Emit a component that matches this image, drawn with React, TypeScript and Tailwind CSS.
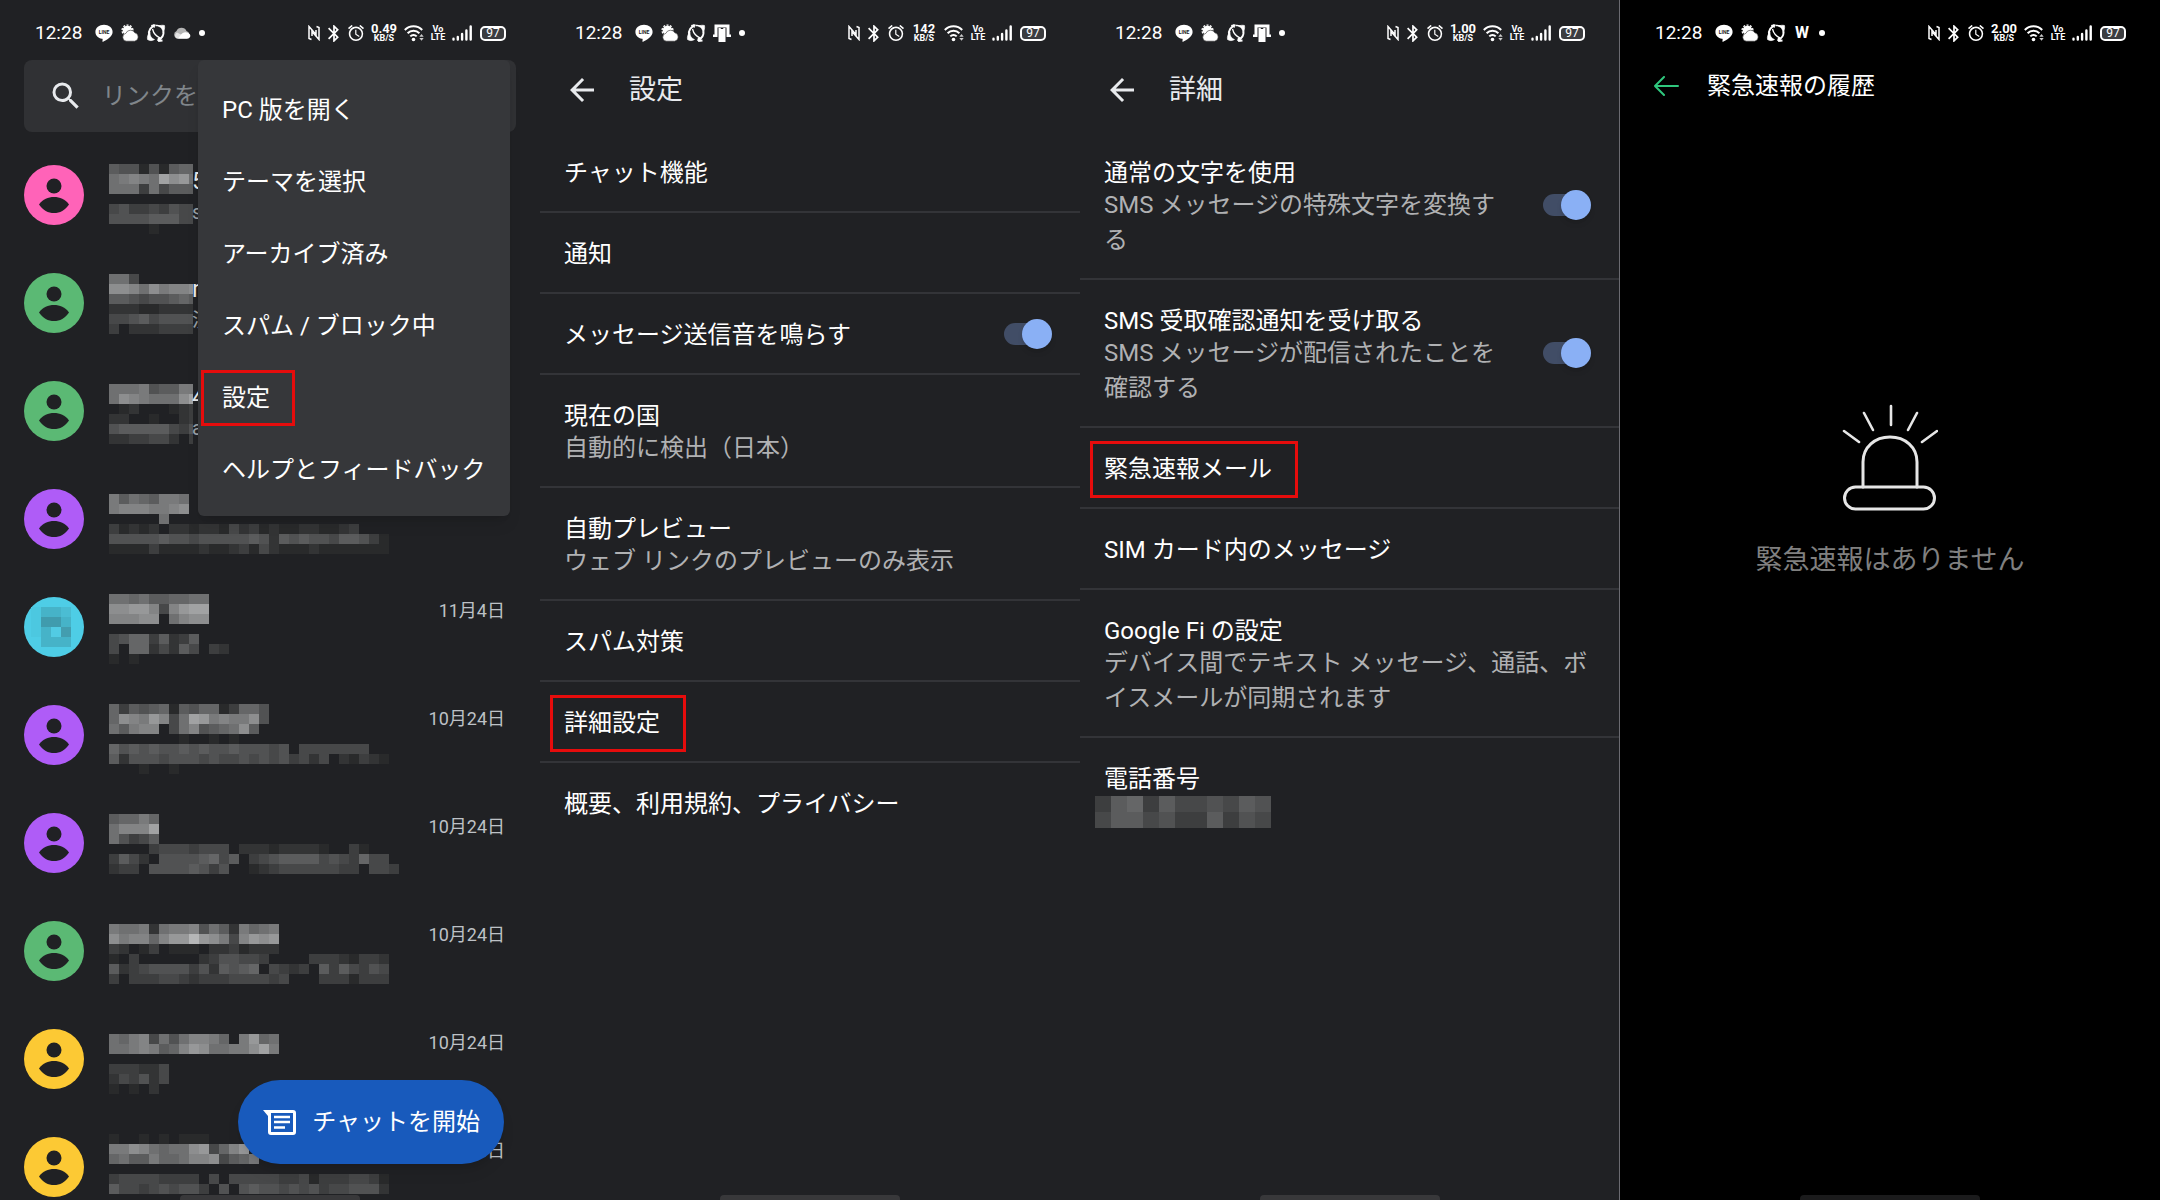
import type { ReactNode } from "react";
import { MdAlarm, MdArrowBack, MdBluetooth, MdSearch } from "react-icons/md";

type Conversation = {
  color: string;
  date?: string;
  top: number;
  cells: string[];
  tail?: string;
  subTail?: string;
  initial?: boolean;
};

type Setting = {
  title: string;
  text?: string;
  toggle?: boolean;
  marked?: boolean;
  hidden?: boolean;
};

// One character per 10px cell, hex brightness, "." is empty.
const conversations: Conversation[] = [
  {
    color: "#ff63b8",
    top: 23,
    tail: "5",
    subTail: "s",
    cells: ["655151677", "89a98dbc8", "888384666", "", "453343544", "555566644", "....1...."],
  },
  {
    color: "#5bb974",
    top: 25,
    tail: "r",
    subTail: "淡",
    cells: ["884......", "bba8b9aab", "665455676", "222112222", "445645555", "3.2223333"],
  },
  {
    color: "#5bb974",
    top: 27,
    tail: "4",
    subTail: "a",
    cells: ["888956699", "8ba9888bd", ".12...123", "22..1..23", "566666435", "2233442.3"],
  },
  {
    color: "#af5cf7",
    top: 29,
    cells: [
      "96876998",
      "9aaa99ab",
      ".....8",
      "31212.2212214231211221123.",
      "5555565545555565265655466531",
      "1111311112112314211121111111",
    ],
  },
  {
    color: "#4ecde6",
    date: "11月4日",
    top: 21,
    initial: true,
    cells: ["8878667788", "bbcca4acdd", "aaabb.8abb", "", "457736236", "4.7724264.32", "1.1"],
  },
  {
    color: "#af5cf7",
    date: "10月24日",
    top: 23,
    cells: [
      "7365671657713775",
      "7ba9ca48dc9a99b5",
      "869aa.48a5678b6",
      ".......1..1.1",
      "756565565655655545.4444444",
      "6255545554544545453424.21321",
      "...1..1",
    ],
  },
  {
    color: "#af5cf7",
    date: "10月24日",
    top: 25,
    cells: [
      "67797",
      "8aaad",
      "85346",
      "....34443444.222122221..31",
      "3642.55556746.34566664543744",
      "233.55556535..12344444433.4432",
    ],
  },
  {
    color: "#5bb974",
    date: "10月24日",
    top: 27,
    cells: [
      "98892899a58629789",
      "b9aa7accfcb94acbc",
      "32.13.111.2231222",
      "1.3......2355443....33321332",
      "623455553526567.4323.6364354",
      "3.3334432333444434...3331333",
    ],
  },
  {
    color: "#fcc934",
    date: "10月24日",
    top: 29,
    cells: ["879a4858aa97.9c78", "889a967acb8899bd9", "", "333224", "243524", "1.1.2"],
  },
  {
    color: "#fcc934",
    date: "10月24日",
    top: 21,
    cells: [
      "1..1.1.111",
      "99ba8788bc47ac",
      "78669778aab4679",
      "",
      "344443333.4.4444433413334431",
      "6443454553.5.565545453445552",
    ],
  },
];

const menuItems = [
  "PC 版を開く",
  "テーマを選択",
  "アーカイブ済み",
  "スパム / ブロック中",
  "設定",
  "ヘルプとフィードバック",
];

const settings: Setting[] = [
  { title: "チャット機能" },
  { title: "通知" },
  { title: "メッセージ送信音を鳴らす", toggle: true },
  { title: "現在の国", text: "自動的に検出（日本）" },
  { title: "自動プレビュー", text: "ウェブ リンクのプレビューのみ表示" },
  { title: "スパム対策" },
  { title: "詳細設定", marked: true },
  { title: "概要、利用規約、プライバシー" },
];

const advanced: Setting[] = [
  { title: "通常の文字を使用", text: "SMS メッセージの特殊文字を変換する", toggle: true },
  {
    title: "SMS 受取確認通知を受け取る",
    text: "SMS メッセージが配信されたことを確認する",
    toggle: true,
  },
  { title: "緊急速報メール", marked: true },
  { title: "SIM カード内のメッセージ" },
  {
    title: "Google Fi の設定",
    text: "デバイス間でテキスト メッセージ、通話、ボイスメールが同期されます",
  },
  { title: "電話番号", hidden: true },
];

const phoneCells = ["36736445465", "46645336354"];

function shade(level: string) {
  const value = 32 + parseInt(level, 16) * 10;
  return `rgb(${value - 1} ${value} ${value + 1})`;
}

function Mosaic({ cells, size = 10, top = 0 }: { cells: string[]; size?: number; top?: number }) {
  return (
    <>
      {cells.map((line, y) =>
        line.split("").map((level, x) =>
          level === "." ? null : (
            <rect
              key={`${x}-${y}`}
              x={x * size}
              y={top + y * size}
              width={size}
              height={size}
              fill={shade(level)}
              shapeRendering="crispEdges"
            />
          ),
        ),
      )}
    </>
  );
}

function LineIcon() {
  return (
    <svg viewBox="0 0 18 18" className="size-[18px]" aria-hidden="true">
      <path
        d="M9 .8C4.200.8.4 3.800.4 7.900c0 3.500 2.800 6.200 6.600 6.800.6.100.7.400.6 1l-.2 1.700c0 .400.300.500.700.300 3.200-1.800 9.500-5 9.500-9.800C17.600 3.800 13.800.8 9 .8z"
        fill="#fff"
      />
      <text x="9" y="10" textAnchor="middle" fontSize="5" fontWeight="700" fill="#222">
        LINE
      </text>
    </svg>
  );
}

function WeatherIcon() {
  return (
    <svg viewBox="0 0 18 18" className="size-[18px]" aria-hidden="true">
      <circle cx="6.500" cy="6.500" r="4.800" fill="#fff" />
      <circle cx="6.500" cy="6.500" r="5.400" fill="none" stroke="#fff" strokeWidth="1.400" strokeDasharray="2 1.400" />
      <path
        d="M5.500 17.200a4 4 0 0 1-.6-7.900 5 5 0 0 1 9-.5 4.300 4.300 0 0 1-.2 8.400z"
        fill="#fff"
        stroke="#333"
        strokeWidth=".6"
      />
    </svg>
  );
}

function OrbitIcon() {
  return (
    <svg viewBox="0 0 20 18" className="-mx-px h-[18px] w-5" fill="none" stroke="#fff" aria-hidden="true">
      <path d="M9.500 1C5 2.500 2 6.500 3.200 11" strokeWidth="1.900" />
      <path d="M5 1.500L8 .5l.5 3z" fill="#fff" strokeWidth=".6" />
      <path d="M1.500 15.500c-.5-3 .5-5.500 2.500-7.500-.3 3.500 1 6 4.500 7.500-2 1.500-5 1.500-7 0z" fill="#fff" strokeWidth=".6" />
      <path d="M10 1.500c4.500-.5 7.500 2 7.800 6" strokeWidth="1.400" />
      <path d="M18.500 1.500c.5 3-.3 5-1.500 7-.3-3-1.500-5-4.500-6.300 2-1 4-1.200 6-.7z" fill="#fff" strokeWidth=".6" />
      <path d="M17.500 7.500c.5 4-2 7-5.500 9M12 17l4.500-.5M12 17l1-3.500" strokeWidth="1.900" />
      <path d="M6.500 5c1 4 3.500 7.500 8 9" strokeWidth="1.300" />
    </svg>
  );
}

function CloudIcon() {
  return (
    <svg viewBox="0 0 18 18" className="size-[18px]" aria-hidden="true">
      <path d="M4 14.500a4 4 0 0 1-.5-7.500A5.500 5.500 0 0 1 13.500 7a4 4 0 0 1 .5 7.500z" fill="#b5b5b5" />
      <path d="M3 14a3.500 3.500 0 0 1 1-5.500L11 12l4 2.500H4z" fill="#e4e4e4" />
      <path d="M7 12c2-4 7-5.500 10-1.500 1 2-.5 4-2.500 4H5z" fill="#fff" />
    </svg>
  );
}

function DeviceIcon() {
  return (
    <svg viewBox="0 0 18 18" className="size-[18px]" fill="#fff" aria-hidden="true">
      <path d="M1.500 0.500h15v10H18V13h-4.500V3.500h-9V13H0v-2.500h1.500z" />
      <path d="M5.500 4h2l.5 1h2l.5-1h2v14h-7z" />
    </svg>
  );
}

function WordIcon() {
  return <span className="w-[18px] text-center text-base font-bold leading-[18px]">W</span>;
}

function NfcIcon() {
  return (
    <svg viewBox="0 0 12 16" className="h-4 w-3" fill="none" stroke="#fff" strokeWidth="1.500" aria-hidden="true">
      <path d="M3.500 14.500L1 13.500V1.500l7 8V5" />
      <path d="M8.500 1.500L11 2.500v12l-7-8V11" />
    </svg>
  );
}

function WifiIcon() {
  return (
    <svg viewBox="0 0 20 18" className="h-[18px] w-5" fill="none" stroke="#fff" strokeWidth="2" aria-hidden="true">
      <path d="M.8 6a12 12 0 0 1 17.400 0M3.600 9.200a8.200 8.200 0 0 1 11.800 0M6.300 12.400a4.600 4.600 0 0 1 6.400 0" />
      <circle cx="9.500" cy="15.500" r="1.800" fill="#fff" stroke="none" />
      <path d="M15.300 12.800l2.200-2.800 2.200 2.800zM15.300 14l2.200 2.800 2.200-2.800z" fill="#ccc" stroke="none" />
    </svg>
  );
}

function SignalIcon() {
  return (
    <svg viewBox="0 0 20 16" className="h-4 w-5" stroke="#fff" strokeWidth="2.400" strokeLinecap="round" aria-hidden="true">
      <path d="M1.500 14.500v-.8M5.800 14.500V12M10.100 14.500V9M14.400 14.500V5.500M18.700 14.500V1.500" />
    </svg>
  );
}

function StatusBar({ speed, icon }: { speed: string; icon: ReactNode }) {
  return (
    <div className="flex h-[66px] shrink-0 items-center justify-between pl-[35px] pr-[34px] text-white">
      <div className="flex items-center gap-2">
        <span className="mr-[5px] w-[47px] text-[19px] leading-6">12:28</span>
        <LineIcon />
        <WeatherIcon />
        <OrbitIcon />
        {icon}
        <span className="size-[6px] rounded-full bg-white" />
      </div>
      <div className="flex items-center gap-2">
        <NfcIcon />
        <MdBluetooth className="h-[19px] w-3" viewBox="5 1 14 22" />
        <MdAlarm className="size-4" viewBox="2 2 20 20" />
        <div className="flex w-6 flex-col items-center font-bold">
          <span className="text-[13px] leading-[10px]">{speed}</span>
          <span className="text-[9px] leading-[9px]">KB/S</span>
        </div>
        <WifiIcon />
        <div className="flex w-3 flex-col items-center text-[9px] font-bold leading-[8px]">
          <span>Vo</span>
          <span>LTE</span>
        </div>
        <SignalIcon />
        <span className="flex h-[15px] w-[26px] items-center justify-center rounded-[5px] border-2 border-white bg-[#3c3d40] text-xs leading-[11px]">
          97
        </span>
      </div>
    </div>
  );
}

function Avatar({ color, initial }: { color: string; initial?: boolean }) {
  return (
    <svg viewBox="0 0 60 60" className="size-[60px] shrink-0" aria-hidden="true">
      <circle cx="30" cy="30" r="30" fill={color} />
      {initial ? (
        <g shapeRendering="crispEdges">
          <path d="M7 10h10v30H7z" fill="#4cc8e0" />
          <path d="M17 10h30v40H17z" fill="#46b3c8" />
          <path d="M37 10h10v10H37z" fill="#4bbdd3" />
          <path d="M17 20h20v10H17z" fill="#409bad" />
          <path d="M27 30h10v10H27z" fill="#52cbe3" />
          <path d="M37 30h10v10H37z" fill="#439daf" />
        </g>
      ) : (
        <g fill="#202124">
          <circle cx="30" cy="21" r="7.500" />
          <path d="M15 39.500C19 34 24 32 30 32s11 2 15 7.500C41 45.500 36 48 30 48s-11-2.500-15-8.500z" />
        </g>
      )}
    </svg>
  );
}

function ConversationRow({ item }: { item: Conversation }) {
  return (
    <li className="flex h-[108px] shrink-0 items-center pl-6 pr-[35px]">
      <Avatar color={item.color} initial={item.initial} />
      <svg viewBox="0 0 290 108" className="ml-[25px] h-[108px] w-[290px] shrink-0">
        <svg width={item.tail ? 84 : 290} height="108">
          <Mosaic cells={item.cells} top={item.top} />
        </svg>
        {item.tail && (
          <text x="83" y="48" fontSize="24" fill="#e8eaed">
            {item.tail}
          </text>
        )}
        {item.subTail && (
          <text x="83" y="78" fontSize="20" fill="#9aa0a6">
            {item.subTail}
          </text>
        )}
      </svg>
      {item.date && (
        <time className="-ml-10 grow self-start whitespace-nowrap pt-[26px] text-right text-lg leading-6 text-[#bdc1c6]">
          {item.date}
        </time>
      )}
    </li>
  );
}

function HomeBar({ dim }: { dim?: boolean }) {
  return (
    <span
      className={`absolute bottom-0 left-1/2 h-[5px] w-[180px] -translate-x-1/2 rounded-t-sm ${dim ? "bg-[#1b1b1c]" : "bg-[#38383a]"}`}
    />
  );
}

function Toggle({ id }: { id: string }) {
  return (
    <span className="relative mr-1 flex h-[30px] w-12 shrink-0 items-center self-center">
      <input
        id={id}
        type="checkbox"
        defaultChecked
        className="h-[22px] w-11 appearance-none rounded-full bg-[#414d66]"
      />
      <span className="pointer-events-none absolute right-0 size-[30px] rounded-full bg-[#8ab0f5] shadow-md" />
    </span>
  );
}

function SettingRow({ item }: { item: Setting }) {
  return (
    <li className="flex min-h-[81px] gap-8 border-b-2 border-[#333438] px-6 last:border-b-0">
      <div className="min-w-0 grow pb-5 pt-[27px]">
        <div className="flex text-2xl leading-[29px] text-white">
          {item.toggle ? (
            <label htmlFor={item.title}>{item.title}</label>
          ) : (
            <button type="button" className="relative text-left">
              {item.title}
              {item.marked && (
                <span className="absolute -inset-y-[14px] -left-[14px] -right-[26px] border-[3px] border-[#e60c0c]" />
              )}
            </button>
          )}
        </div>
        {item.text && <p className="text-2xl leading-[35px] text-[#b0b1b3]">{item.text}</p>}
        {item.hidden && (
          <svg viewBox="0 0 176 32" className="-ml-[9px] mt-[2px] h-8 w-44" aria-hidden="true">
            <Mosaic cells={phoneCells} size={16} />
          </svg>
        )}
      </div>
      {item.toggle && <Toggle id={item.title} />}
    </li>
  );
}

function SettingsScreen({
  title,
  speed,
  items,
  divided,
}: {
  title: string;
  speed: string;
  items: Setting[];
  divided?: boolean;
}) {
  return (
    <section
      className={`relative flex flex-col overflow-hidden bg-[#202124] ${divided ? "border-r border-[#6a6a70]" : ""}`}
    >
      <StatusBar speed={speed} icon={<DeviceIcon />} />
      <header className="flex h-12 items-center gap-[29px] pl-6 text-[#e8eaed]">
        <button type="button" aria-label="戻る">
          <MdArrowBack className="size-9" />
        </button>
        <h1 className="text-[27px] leading-9">{title}</h1>
      </header>
      <ul className="pt-[18px]">
        {items.map((item) => (
          <SettingRow key={item.title} item={item} />
        ))}
      </ul>
      <HomeBar />
    </section>
  );
}

function MessagesScreen() {
  return (
    <section className="relative flex flex-col overflow-hidden bg-[#202124]">
      <StatusBar speed="0.49" icon={<CloudIcon />} />
      <label className="mx-6 -mt-[6px] flex h-[72px] shrink-0 items-center gap-[18px] rounded-lg bg-[#303134] pl-6">
        <MdSearch className="size-9 shrink-0 text-[#e8eaed]" />
        <input
          type="search"
          aria-label="検索"
          placeholder="リンクを"
          className="min-w-0 grow bg-transparent text-2xl leading-8 placeholder:text-[#80868b]"
        />
      </label>
      <ul className="flex flex-col pt-[9px]">
        {conversations.map((item, index) => (
          <ConversationRow key={index} item={item} />
        ))}
      </ul>
      <HomeBar />
      <nav className="absolute right-[30px] top-[60px] flex w-[312px] flex-col rounded-md bg-[#36373a] pb-[10px] pt-[14px] shadow-lg">
        {menuItems.map((label) => (
          <button
            key={label}
            type="button"
            className="flex h-[72px] items-center px-6 text-2xl leading-8 text-white"
          >
            <span className="relative whitespace-nowrap">
              {label}
              {label === "設定" && (
                <span className="absolute -inset-y-3 -left-[21px] -right-[25px] border-[3px] border-[#e60c0c]" />
              )}
            </span>
          </button>
        ))}
      </nav>
      <button
        type="button"
        className="absolute bottom-9 right-9 flex h-[84px] items-center gap-4 rounded-full bg-[#185abc] pl-[25px] pr-6 text-2xl leading-8 text-white shadow-lg"
      >
        <svg viewBox="0 0 33 25" className="h-[25px] w-[33px]" aria-hidden="true">
          <path d="M0 0h30a3 3 0 0 1 3 3v19a3 3 0 0 1-3 3H8a3 3 0 0 1-3-3V6z" fill="#fff" />
          <path d="M8 3h22v19H8z" fill="#185abc" />
          <path d="M11 7h16M11 12h16M11 17.500h11" stroke="#fff" strokeWidth="2.500" />
        </svg>
        チャットを開始
      </button>
    </section>
  );
}

function AlertHistoryScreen() {
  return (
    <section className="relative flex flex-col overflow-hidden bg-black">
      <StatusBar speed="2.00" icon={<WordIcon />} />
      <header className="flex h-10 items-center gap-7 pl-[34px] text-white">
        <button type="button" aria-label="戻る">
          <svg
            viewBox="0 0 25 20"
            className="h-5 w-[25px]"
            fill="none"
            stroke="#2fc77d"
            strokeWidth="2"
            strokeLinecap="round"
            strokeLinejoin="round"
            aria-hidden="true"
          >
            <path d="M10 1L1 10l9 9M1 10h23" />
          </svg>
        </button>
        <h1 className="text-2xl leading-8">緊急速報の履歴</h1>
      </header>
      <div className="flex flex-col items-center pt-[298px]">
        <svg
          viewBox="0 0 96 108"
          className="h-[108px] w-24"
          fill="none"
          stroke="#e6e6e6"
          strokeWidth="3"
          strokeLinecap="round"
          aria-hidden="true"
        >
          <path d="M49 2v19M22 9l9 17M75 9l-9 17M2 27l15 11M95 27L80 38" strokeWidth="2.600" />
          <path d="M21 83V58C21 43 33 33 48 33s27 10 27 25v25" />
          <rect x="2.500" y="83" width="90" height="22" rx="11" />
        </svg>
        <p className="mt-[30px] text-[27px] leading-9 text-[#808080]">緊急速報はありません</p>
      </div>
      <HomeBar dim />
    </section>
  );
}

export default function App() {
  return (
    <main
      lang="ja"
      className="grid h-screen grid-cols-4 overflow-hidden bg-[#202124] font-[Roboto,'Noto_Sans_CJK_JP',sans-serif]"
    >
      <MessagesScreen />
      <SettingsScreen title="設定" speed="142" items={settings} />
      <SettingsScreen title="詳細" speed="1.00" items={advanced} divided />
      <AlertHistoryScreen />
    </main>
  );
}
